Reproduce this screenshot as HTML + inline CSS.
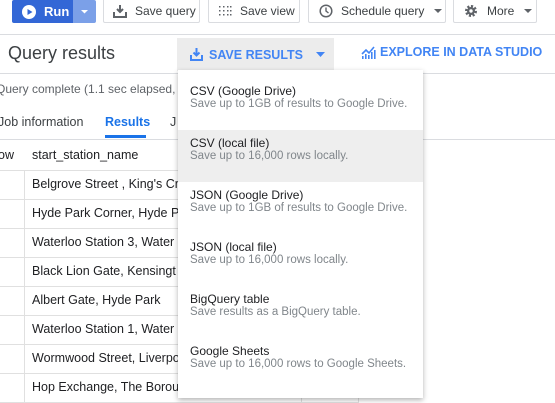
<!DOCTYPE html>
<html><head><style>
*{box-sizing:border-box;margin:0;padding:0}
body{width:555px;height:403px;overflow:hidden;background:#fff;font-family:"Liberation Sans",sans-serif;position:relative;color:#202124}
.a{position:absolute;white-space:nowrap}
.btn{position:absolute;top:-2px;height:25px;border:1px solid #dadce0;border-radius:2px;background:#fff;font-size:12px;color:#3c4043;display:flex;align-items:center;white-space:nowrap;overflow:hidden}
.hl{position:absolute;left:0;width:555px;height:1px;background:#dadce0}
.row{position:absolute;left:0;width:358px;height:1px;background:#e0e0e0}
.cell{position:absolute;left:32px;font-size:12.5px;color:#202124;white-space:nowrap;width:146px;overflow:hidden}
.mi{position:absolute;left:0;width:245px;height:52px;padding:7px 0 0 12px;white-space:nowrap}
.mi .t{font-size:12px;color:#202124;line-height:13px}
.mi .s{font-size:11.5px;color:#80868b;line-height:13px}
</style></head><body>
<div class="a" style="left:12px;top:0;width:61px;height:23px;background:#3367d6;border-radius:2px 0 0 2px;color:#fff;font-size:13px;font-weight:bold;display:flex;align-items:center">
<svg width="14" height="14" style="margin:0 8px 0 10px"><circle cx="7" cy="7" r="7" fill="#fff"/><path d="M5.5 4v6l5-3z" fill="#3367d6"/></svg>Run</div>
<div class="a" style="left:73px;top:0;width:23px;height:23px;background:#7ba0e8;border-radius:0 2px 2px 0"><svg width="23" height="23"><path d="M8 10h7l-3.5 3.5z" fill="#fff"/></svg></div>
<div class="btn" style="left:103px;width:97px"><svg width="14" height="14" style="margin:0 8px 0 9px;flex:none"><path d="M7 1v7M4 5l3 3 3-3" stroke="#5f6368" stroke-width="2" fill="none"/><path d="M1 8v5h12V8" stroke="#5f6368" stroke-width="2" fill="none"/></svg>Save query</div>
<div class="btn" style="left:208px;width:92px"><svg width="14" height="12" style="margin:0 8px 0 9px;flex:none" fill="#5f6368"><rect x="1" y="1" width="1.5" height="1.5"/><rect x="5" y="1" width="1.5" height="1.5"/><rect x="9" y="1" width="1.5" height="1.5"/><rect x="12" y="1" width="1.5" height="1.5"/><rect x="1" y="5" width="1.5" height="1.5"/><rect x="5" y="5" width="1.5" height="1.5"/><rect x="9" y="5" width="1.5" height="1.5"/><rect x="12" y="5" width="1.5" height="1.5"/><rect x="1" y="9" width="1.5" height="1.5"/><rect x="5" y="9" width="1.5" height="1.5"/><rect x="9" y="9" width="1.5" height="1.5"/><rect x="12" y="9" width="1.5" height="1.5"/></svg>Save view</div>
<div class="btn" style="left:308px;width:138px"><svg width="14" height="14" style="margin:0 8px 0 10px;flex:none"><circle cx="7" cy="7" r="5.8" stroke="#5f6368" stroke-width="1.5" fill="none"/><path d="M7 3.5V7l2.5 2" stroke="#5f6368" stroke-width="1.4" fill="none"/></svg>Schedule query<svg width="10" height="6" style="margin-left:9px;flex:none"><path d="M1 1h8L5 5z" fill="#5f6368"/></svg></div>
<div class="btn" style="left:453px;width:84px"><svg width="14" height="14" style="margin:0 9px 0 10px;flex:none"><circle cx="7" cy="7" r="4.5" fill="none" stroke="#5f6368" stroke-width="3" stroke-dasharray="2 1.5"/><circle cx="7" cy="7" r="4" fill="#5f6368"/><circle cx="7" cy="7" r="1.7" fill="#fff"/></svg>More<svg width="10" height="6" style="margin-left:9px;flex:none"><path d="M1 1h8L5 5z" fill="#5f6368"/></svg></div>
<div class="hl" style="top:34px"></div>
<div class="a" style="left:8px;top:43px;font-size:18px;color:#3c4043">Query results</div>
<div class="a" style="left:177px;top:38px;width:157px;height:33px;background:#ececec;color:#4285f4;font-size:12.5px;font-weight:bold;display:flex;align-items:center">
<svg width="13" height="13" style="margin:0 6px 0 13px"><path d="M6.5 0v7M3.5 4.5l3 3 3-3" stroke="#4285f4" stroke-width="2" fill="none"/><path d="M1 7v5h11V7" stroke="#4285f4" stroke-width="2" fill="none"/></svg>SAVE RESULTS<svg width="10" height="6" style="margin-left:13px"><path d="M0 0h9L4.5 5z" fill="#4285f4"/></svg></div>
<div class="a" style="left:361px;top:45px;color:#4285f4;font-size:12.5px;font-weight:bold;display:flex;align-items:center">
<svg width="15" height="14" style="margin-right:4px"><path d="M1 9l4-4 3 3 5-6" stroke="#4285f4" stroke-width="1.6" fill="none"/><g fill="#4285f4"><rect x="1" y="11" width="1.6" height="3"/><rect x="4" y="9" width="1.6" height="5"/><rect x="7" y="10" width="1.6" height="4"/><rect x="10" y="7" width="1.6" height="7"/><rect x="13" y="5" width="1.6" height="9"/></g></svg>EXPLORE IN DATA STUDIO</div>
<div class="hl" style="top:73px"></div>
<div class="a" style="left:-4px;top:82px;font-size:12px;color:#5f6368">Query complete (1.1 sec elapsed, 0</div>
<div class="a" style="left:-2px;top:115px;font-size:12.5px;color:#3c4043">Job information</div>
<div class="a" style="left:105px;top:115px;font-size:12.5px;color:#1a73e8;font-weight:bold">Results</div>
<div class="a" style="left:170px;top:115px;font-size:12.5px;color:#3c4043">J</div>
<div class="a" style="left:105px;top:135px;width:41px;height:3px;background:#1a73e8"></div>
<div class="hl" style="top:139px"></div>
<div class="a" style="left:-2px;top:148px;font-size:12.5px">ow</div>
<div class="cell" style="top:148px">start_station_name</div>
<div class="a" style="left:24px;top:170px;width:1px;height:233px;background:#e0e0e0"></div>
<div class="a" style="left:301px;top:170px;width:1px;height:233px;background:#e0e0e0"></div>
<div class="a" style="left:358px;top:140px;width:1px;height:263px;background:#e0e0e0"></div>
<div class="row" style="top:170px"></div><div class="row" style="top:199px"></div><div class="row" style="top:228px"></div><div class="row" style="top:257px"></div><div class="row" style="top:286px"></div><div class="row" style="top:315px"></div><div class="row" style="top:344px"></div><div class="row" style="top:373px"></div><div class="row" style="top:402px"></div>
<div class="cell" style="top:177px">Belgrove Street , King's Cr</div>
<div class="cell" style="top:206px">Hyde Park Corner, Hyde P</div>
<div class="cell" style="top:235px">Waterloo Station 3, Water</div>
<div class="cell" style="top:264px">Black Lion Gate, Kensingt</div>
<div class="cell" style="top:293px">Albert Gate, Hyde Park</div>
<div class="cell" style="top:322px">Waterloo Station 1, Water</div>
<div class="cell" style="top:351px">Wormwood Street, Liverpo</div>
<div class="cell" style="top:380px">Hop Exchange, The Borou</div>
<div class="a" style="left:178px;top:70px;width:245px;height:328px;background:#fff;box-shadow:0 2px 5px rgba(0,0,0,.3)">
<div class="mi" style="top:8px"><div class="t">CSV (Google Drive)</div><div class="s">Save up to 1GB of results to Google Drive.</div></div>
<div class="mi" style="top:60px;background:#eeeeee"><div class="t">CSV (local file)</div><div class="s">Save up to 16,000 rows locally.</div></div>
<div class="mi" style="top:112px"><div class="t">JSON (Google Drive)</div><div class="s">Save up to 1GB of results to Google Drive.</div></div>
<div class="mi" style="top:164px"><div class="t">JSON (local file)</div><div class="s">Save up to 16,000 rows locally.</div></div>
<div class="mi" style="top:216px"><div class="t">BigQuery table</div><div class="s">Save results as a BigQuery table.</div></div>
<div class="mi" style="top:268px"><div class="t">Google Sheets</div><div class="s">Save up to 16,000 rows to Google Sheets.</div></div>
</div>
</body></html>
